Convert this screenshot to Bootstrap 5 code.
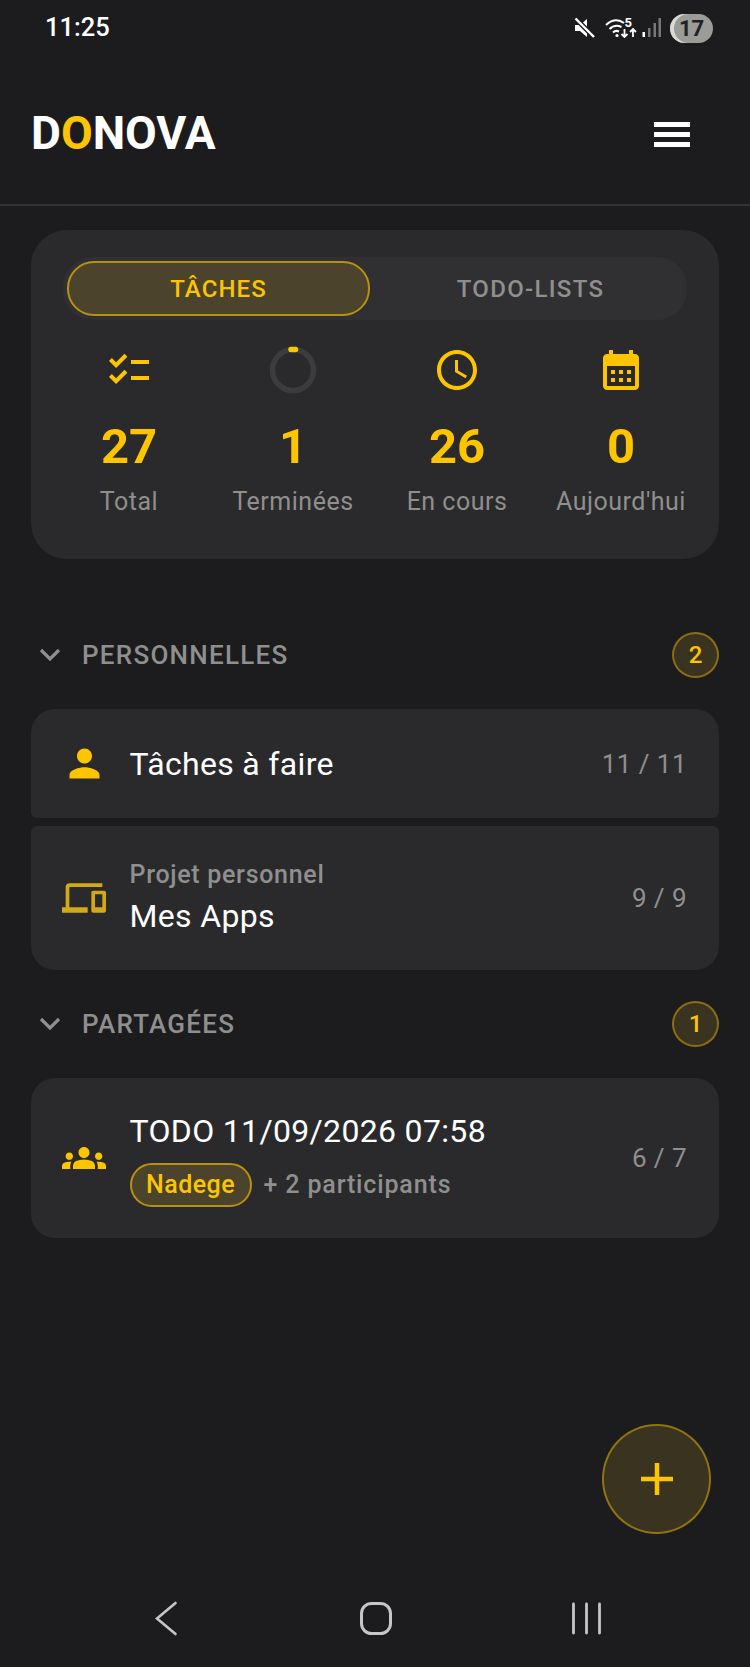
<!DOCTYPE html>
<html lang="fr">
<head>
<meta charset="utf-8">
<title>Donova</title>
<link href="https://cdn.jsdelivr.net/npm/bootstrap@5.3.0/dist/css/bootstrap.min.css" rel="stylesheet">
<style>
html,body{background:#1c1c1e;}
body{font-family:Roboto,"Liberation Sans",sans-serif;color:#fff;width:750px;min-height:1667px;}
.app-shell{position:relative;min-height:1667px;}
.status-strip{height:62px;padding:0 37px 0 45px;}
.status-time{font-size:25.5px;font-weight:500;line-height:1;margin-top:-6px;}
.status-icons{margin-top:-6px;}
.batt-pill{width:43px;height:29px;border-radius:15px;background:#9b9b97;color:#222;font-size:22px;font-weight:700;line-height:29px;text-align:center;margin-left:6px;box-shadow:inset 4px 0 0 #d8d8d4;}
.top-head{height:144px;padding:0 60px 0 31px;border-bottom:2px solid #343436;}
.logo-word{font-size:46px;font-weight:700;line-height:1;}
.logo-word b{color:#fcc500;font-weight:700;}
.burger{width:36px;margin-top:2px;}
.burger i{display:block;height:5px;background:#fff;margin-bottom:5px;}
.burger i:last-child{margin-bottom:0;}
.page-body{padding:24px 31px 0;}
.stats-panel{background:#2a2a2c;border:0;border-radius:36px;height:329px;padding:27px 32px 0;color:#fff;}
.tab-track{background:#303032;border-radius:30px;height:63px;padding:4px 4px;}
.tab-item{flex:0 0 auto;font-size:24px;font-weight:500;letter-spacing:1.1px;color:#8f8f8d;border-radius:27px;height:55px;line-height:52px;text-align:center;border:2px solid transparent;}
.tab-item.tab-on{width:303px;background:#4b432b;border-color:#b8920f;color:#fcc500;}
.tab-item.tab-off{flex:1 1 auto;letter-spacing:1.3px;padding-left:8px;}
.stat-row{margin:26px -16px 0;}
.stat-cell{width:164px;text-align:center;}
.stat-cell svg{display:block;margin:0 auto;}
.stat-num{font-size:49px;font-weight:700;color:#fcc500;line-height:1;margin-top:28px;}
.stat-lab{font-size:25px;color:#8f8f8d;line-height:1;margin-top:18px;letter-spacing:.5px;white-space:nowrap;}
.sect-head{height:46px;}
.sect-a{margin-top:73px;margin-bottom:31px;}
.sect-b{margin-top:31px;margin-bottom:31px;}
.sect-title{font-size:26px;font-weight:500;letter-spacing:1.25px;color:#8f8f8d;margin-left:21px;line-height:1;}
.sect-count{width:47px;height:46px;border-radius:50%;background:#3a3320;border:2px solid #8a6f12;color:#fcc500;font-size:24px;font-weight:500;}
.tile{background:#2a2a2c;border:0;padding:0 32px 0 31px;color:#fff;}
.tile-one{height:109px;border-radius:24px 24px 6px 6px;margin-bottom:8px;}
.tile-two{height:144px;border-radius:6px 6px 24px 24px;}
.tile-three{height:160px;border-radius:24px;}
.tile-ico{width:44px;margin-right:23.5px;flex:none;}
.tile-main{font-size:32px;line-height:1;letter-spacing:.33px;}
.tile-sup{font-size:25px;font-weight:500;color:#8f8f8d;line-height:1;letter-spacing:.7px;margin-bottom:13px;}
.tile-num{font-size:26px;color:#8f8f8d;letter-spacing:.45px;line-height:1;}
.tile-stack{padding-top:6px;}
.tile-pair{padding-bottom:2px;}
.person-chip{height:44px;width:122px;border-radius:22px;background:#4b432b;border:2px solid #b8920f;color:#fcc500;font-size:25px;font-weight:500;letter-spacing:.45px;}
.chip-more{font-size:25px;font-weight:500;color:#8f8f8d;letter-spacing:.85px;margin-left:12px;}
.fab-add{position:absolute;left:602px;top:1424px;width:109px;height:110px;border-radius:50%;background:#3a3320;border:2px solid #8f7410;padding:0;}
.sys-nav{position:absolute;left:0;right:0;top:1600px;height:36px;}
</style>
</head>
<body>
<div class="app-shell d-flex flex-column">
  <div class="status-strip d-flex align-items-center justify-content-between">
    <span class="status-time">11:25</span>
    <div class="status-icons d-flex align-items-center">
      <svg width="90" height="30" viewBox="574 13 90 30" aria-hidden="true">
        <path d="M575 25h5l7-6v18l-7-6h-5z" fill="#fff"/>
        <path d="M575 18l19 19" stroke="#1c1c1e" stroke-width="5"/>
        <path d="M575.500 18.500l18.500 18.500" stroke="#fff" stroke-width="2.400"/>
        <g fill="none" stroke="#fff" stroke-width="2">
          <path d="M606 25c6-6 13-6 18-2"/>
          <path d="M609.500 29c4-4 8-4 12-2"/>
          <path d="M613 32.500c2-2 4-2 6-1"/>
        </g>
        <circle cx="617" cy="35.500" r="1.600" fill="#fff"/>
        <text x="624.500" y="27" font-family="Roboto" font-size="13" font-weight="700" fill="#fff">5</text>
        <path d="M624.500 29v8M621.500 34l3 3 3-3M633 37v-8M630 32l3-3 3 3" fill="none" stroke="#fff" stroke-width="1.800"/>
        <rect x="642.500" y="32" width="2.500" height="5" fill="#fff"/>
        <rect x="648" y="28" width="2.500" height="9" fill="#77777a"/>
        <rect x="653.500" y="23" width="2.500" height="14" fill="#77777a"/>
        <rect x="658.500" y="18" width="2.500" height="19" fill="#77777a"/>
      </svg>
      <span class="batt-pill">17</span>
    </div>
  </div>
  <header class="top-head d-flex align-items-center justify-content-between">
    <span class="logo-word">D<b>O</b>NOVA</span>
    <div class="burger" aria-label="Menu"><i></i><i></i><i></i></div>
  </header>
  <main class="page-body">
    <section class="card stats-panel">
      <div class="tab-track d-flex">
        <div class="tab-item tab-on">TÂCHES</div>
        <div class="tab-item tab-off">TODO-LISTS</div>
      </div>
      <div class="stat-row d-flex">
        <div class="stat-cell">
          <svg width="48" height="48" viewBox="0 0 24 24" fill="#fcc500"><path d="M22 7h-9v2h9V7zm0 8h-9v2h9v-2zM5.540 11 2 7.460l1.410-1.410 2.120 2.120 4.240-4.240 1.410 1.410L5.540 11zm0 8L2 15.460l1.410-1.410 2.120 2.120 4.240-4.240 1.410 1.410L5.540 19z"/></svg>
          <div class="stat-num">27</div><div class="stat-lab">Total</div>
        </div>
        <div class="stat-cell">
          <svg width="48" height="48" viewBox="0 0 48 48"><circle cx="24" cy="24" r="20.500" fill="none" stroke="#3c3c3e" stroke-width="5.500"/><path d="M22 3.600a20.500 20.500 0 0 1 4.500 0" fill="none" stroke="#fcc500" stroke-width="5.500" stroke-linecap="round"/></svg>
          <div class="stat-num">1</div><div class="stat-lab">Terminées</div>
        </div>
        <div class="stat-cell">
          <svg width="48" height="48" viewBox="0 0 24 24" fill="#fcc500"><path d="M11.990 2C6.470 2 2 6.480 2 12s4.470 10 9.990 10C17.520 22 22 17.520 22 12S17.520 2 11.990 2zM12 20c-4.420 0-8-3.580-8-8s3.580-8 8-8 8 3.580 8 8-3.580 8-8 8zm.5-13H11v6l5.250 3.150.75-1.230-4.500-2.670z"/></svg>
          <div class="stat-num">26</div><div class="stat-lab">En cours</div>
        </div>
        <div class="stat-cell">
          <svg width="48" height="48" viewBox="0 0 24 24" fill="#fcc500"><path d="M19 4h-1V2h-2v2H8V2H6v2H5c-1.100 0-2 .9-2 2v14c0 1.100.9 2 2 2h14c1.100 0 2-.9 2-2V6c0-1.100-.9-2-2-2zm0 16H5V10h14v10zM9 14H7v-2h2v2zm4 0h-2v-2h2v2zm4 0h-2v-2h2v2zm-8 4H7v-2h2v2zm4 0h-2v-2h2v2zm4 0h-2v-2h2v2z"/></svg>
          <div class="stat-num">0</div><div class="stat-lab">Aujourd'hui</div>
        </div>
      </div>
    </section>

    <div class="sect-head sect-a d-flex align-items-center justify-content-between">
      <div class="d-flex align-items-center">
        <svg class="ms-2" width="22" height="14" viewBox="0 0 22 14"><path d="M2 2l9 9 9-9" fill="none" stroke="#8f8f8d" stroke-width="3.200"/></svg>
        <span class="sect-title">PERSONNELLES</span>
      </div>
      <span class="sect-count d-flex align-items-center justify-content-center">2</span>
    </div>

    <div class="card tile tile-one flex-row align-items-center">
      <div class="tile-ico"><svg width="45" height="45" viewBox="0 0 24 24" fill="#fcc500" class="d-block"><path d="M12 12c2.210 0 4-1.790 4-4s-1.790-4-4-4-4 1.790-4 4 1.790 4 4 4zm0 2c-2.670 0-8 1.340-8 4v2h16v-2c0-2.660-5.330-4-8-4z"/></svg></div>
      <div class="flex-grow-1 tile-main">Tâches à faire</div>
      <div class="tile-num">11 / 11</div>
    </div>
    <div class="card tile tile-two flex-row align-items-center">
      <div class="tile-ico"><svg width="44" height="44" viewBox="0 0 24 24" fill="#d4a916" class="d-block"><path d="M4 6h18V4H4c-1.100 0-2 .9-2 2v11H0v3h14v-3H4V6zm19 2h-6c-.55 0-1 .45-1 1v10c0 .55.45 1 1 1h6c.55 0 1-.45 1-1V9c0-.55-.45-1-1-1zm-1 9h-4v-7h4v7z"/></svg></div>
      <div class="flex-grow-1 tile-pair">
        <div class="tile-sup">Projet personnel</div>
        <div class="tile-main">Mes Apps</div>
      </div>
      <div class="tile-num">9 / 9</div>
    </div>

    <div class="sect-head sect-b d-flex align-items-center justify-content-between">
      <div class="d-flex align-items-center">
        <svg class="ms-2" width="22" height="14" viewBox="0 0 22 14"><path d="M2 2l9 9 9-9" fill="none" stroke="#8f8f8d" stroke-width="3.200"/></svg>
        <span class="sect-title">PARTAGÉES</span>
      </div>
      <span class="sect-count d-flex align-items-center justify-content-center">1</span>
    </div>

    <div class="card tile tile-three flex-row align-items-center">
      <div class="tile-ico"><svg width="44" height="44" viewBox="0 0 24 24" fill="#fcc500" class="d-block"><path d="M12 12.750c1.630 0 3.070.39 4.240.9 1.080.48 1.760 1.560 1.760 2.730V18H6v-1.610c0-1.180.68-2.260 1.760-2.730 1.170-.52 2.610-.91 4.240-.91zM4 13c1.100 0 2-.9 2-2s-.9-2-2-2-2 .9-2 2 .9 2 2 2zm1.130 1.100c-.37-.06-.74-.1-1.130-.1-.99 0-1.930.21-2.780.58C.48 14.900 0 15.620 0 16.430V18h4.500v-1.610c0-.83.23-1.610.63-2.290zM20 13c1.100 0 2-.9 2-2s-.9-2-2-2-2 .9-2 2 .9 2 2 2zm4 3.430c0-.81-.48-1.530-1.220-1.850-.85-.37-1.790-.58-2.780-.58-.39 0-.76.04-1.130.1.4.68.63 1.460.63 2.290V18H24v-1.570zM12 6c1.660 0 3 1.340 3 3s-1.340 3-3 3-3-1.340-3-3 1.340-3 3-3z"/></svg></div>
      <div class="flex-grow-1 tile-stack">
        <div class="tile-main mb-3">TODO 11/09/2026 07:58</div>
        <div class="d-flex align-items-center">
          <span class="person-chip d-flex align-items-center justify-content-center">Nadege</span>
          <span class="chip-more">+ 2 participants</span>
        </div>
      </div>
      <div class="tile-num">6 / 7</div>
    </div>
  </main>

  <button class="btn fab-add d-flex align-items-center justify-content-center" type="button" aria-label="Ajouter">
    <svg width="34" height="34" viewBox="0 0 34 34"><path d="M17 1v32M1 17h32" stroke="#fcc500" stroke-width="4.500" fill="none"/></svg>
  </button>

  <nav class="sys-nav" aria-label="Navigation système">
    <svg width="750" height="36" viewBox="0 1600 750 36" class="d-block">
      <path d="M175.500 1603l-18.500 15.500 18.500 15.500" fill="none" stroke="#c6c6c6" stroke-width="2.600" stroke-linecap="round"/>
      <rect x="361.500" y="1603.500" width="29" height="30" rx="10" fill="none" stroke="#c6c6c6" stroke-width="3"/>
      <path d="M573.500 1604v29M586.500 1604v29M599.500 1604v29" stroke="#c6c6c6" stroke-width="2.800" stroke-linecap="round"/>
    </svg>
  </nav>
</div>
<script src="https://cdn.jsdelivr.net/npm/bootstrap@5.3.0/dist/js/bootstrap.bundle.min.js"></script>
</body>
</html>
